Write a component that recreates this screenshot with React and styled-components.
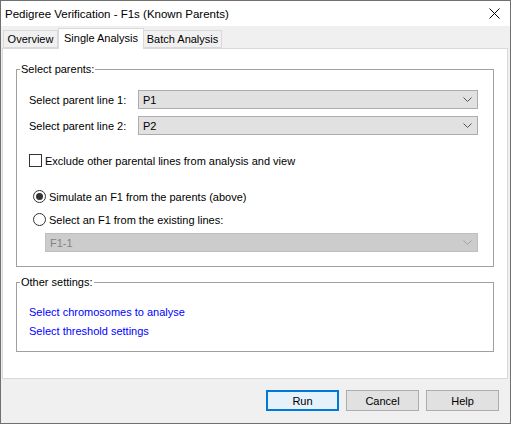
import React from 'react';
import styled, {createGlobalStyle} from 'styled-components';

const GlobalStyle = createGlobalStyle`
	html, body {
		margin: 0;
		padding: 0;
		background: #ffffff;
	}
	body {
		font-family: "Liberation Sans", Arial, sans-serif;
		font-size: 11px;
		color: #000000;
	}
`;

const Window = styled.div`
	width: 511px;
	height: 424px;
	box-sizing: border-box;
	border: 1px solid #707070;
	background: #f0f0f0;
	display: flex;
	flex-direction: column;
`;

const TitleBar = styled.div`
	height: 25px;
	flex: 0 0 auto;
	background: #ffffff;
	display: flex;
	align-items: center;
	justify-content: space-between;
	padding: 0 10px 0 4px;
	font-size: 11.5px;
`;

const CloseButton = styled.div`
	width: 12px;
	height: 12px;
	display: flex;
	align-items: center;
	justify-content: center;
`;

const Body = styled.div`
	flex: 1;
	display: flex;
	flex-direction: column;
	padding: 0 2px 0 1px;
`;

const TabRow = styled.div`
	display: flex;
	align-items: flex-end;
	height: 22px;
	padding-left: 1px;
`;

const Tab = styled.div`
	box-sizing: border-box;
	height: ${p => (p.$active ? '21px' : '18px')};
	width: ${p => p.$width}px;
	margin: ${p => (p.$active ? '0 0 -1px 0' : '0')};
	margin-left: ${p => (p.$active ? '0' : '-1px')};
	position: relative;
	z-index: ${p => (p.$active ? 1 : 0)};
	background: ${p => (p.$active ? '#ffffff' : '#f0f0f0')};
	border: 1px solid #d9d9d9;
	border-bottom: ${p => (p.$active ? 'none' : '1px solid #d9d9d9')};
	display: flex;
	align-items: center;
	justify-content: center;
	white-space: nowrap;
	padding-bottom: ${p => (p.$active ? '2px' : '0')};
	&:first-child {
		margin-left: 0;
	}
`;

const Panel = styled.div`
	box-sizing: border-box;
	height: 331px;
	flex: 0 0 auto;
	background: #ffffff;
	border: 1px solid #d9d9d9;
	padding: 13px 13px 0 13px;
	display: flex;
	flex-direction: column;
	gap: 8px;
`;

const GroupBox = styled.fieldset`
	margin: 0;
	border: 1px solid #a0a0a0;
	padding: 0 15px ${p => p.$bottom}px 3px;
	min-width: 0;
`;

const Legend = styled.legend`
	padding: 0 1px;
	line-height: 15px;
`;

const GroupContent = styled.div`
	display: flex;
	flex-direction: column;
	padding-left: 9px;
`;

const ComboRow = styled.div`
	display: grid;
	grid-template-columns: ${p => (p.$single ? '1fr' : '109px 1fr')};
	align-items: center;
	margin-top: ${p => p.$top}px;
`;

const Combo = styled.div`
	box-sizing: border-box;
	height: 19px;
	background: ${p => (p.$disabled ? '#cccccc' : '#e1e1e1')};
	border: 1px solid ${p => (p.$disabled ? '#bfbfbf' : '#adadad')};
	color: ${p => (p.$disabled ? '#838383' : '#000000')};
	display: flex;
	align-items: center;
	justify-content: space-between;
	padding: 0 5px 0 4px;
	margin-left: ${p => p.$indent || 0}px;
`;

const OptionRow = styled.label`
	display: flex;
	align-items: center;
	height: 15px;
	margin-top: ${p => p.$top}px;
	padding-left: ${p => p.$indent || 0}px;
`;

const CheckBox = styled.span`
	box-sizing: border-box;
	width: 13px;
	height: 13px;
	border: 1px solid #333333;
	background: #ffffff;
	margin-right: 3px;
`;

const Radio = styled.span`
	box-sizing: border-box;
	width: 13px;
	height: 13px;
	border-radius: 50%;
	border: 1px solid #333333;
	background: #ffffff;
	margin-right: 3px;
	display: flex;
	align-items: center;
	justify-content: center;
	&::after {
		content: '';
		width: 7px;
		height: 7px;
		border-radius: 50%;
		background: ${p => (p.$checked ? '#333333' : 'transparent')};
	}
`;

const LinkText = styled.a`
	color: #0000ff;
	text-decoration: none;
	line-height: 15px;
	margin-top: ${p => p.$top}px;
	cursor: pointer;
`;

const Footer = styled.div`
	flex: 1;
	display: flex;
	justify-content: flex-end;
	align-items: flex-start;
	gap: 7px;
	padding: 11px 9px 0 0;
`;

const Button = styled.button`
	box-sizing: border-box;
	width: 73px;
	height: 21px;
	margin: 0;
	font-family: inherit;
	font-size: 11px;
	color: #000000;
	background: ${p => (p.$default ? '#e5f1fb' : '#e1e1e1')};
	border: 1px solid ${p => (p.$default ? '#0078d7' : '#adadad')};
	box-shadow: ${p => (p.$default ? 'inset 0 0 0 1px #0078d7' : 'none')};
	padding: 0;
`;

const Chevron = ({color}) => (
	<svg width="9" height="5" viewBox="0 0 9 5">
		<polyline points="0.5,0.5 4.5,4.5 8.5,0.5" fill="none" stroke={color} strokeWidth="1"/>
	</svg>
);

const ParentsGroup = () => {
	return (
		<GroupBox $bottom={14}>
			<Legend>Select parents:</Legend>
			<GroupContent>
				<ComboRow $top={13}>
					<span>Select parent line 1:</span>
					<Combo>P1<Chevron color="#555555"/></Combo>
				</ComboRow>
				<ComboRow $top={7}>
					<span>Select parent line 2:</span>
					<Combo>P2<Chevron color="#555555"/></Combo>
				</ComboRow>
				<OptionRow $top={18}>
					<CheckBox/>
					Exclude other parental lines from analysis and view
				</OptionRow>
				<OptionRow $top={21} $indent={4}>
					<Radio $checked/>
					Simulate an F1 from the parents (above)
				</OptionRow>
				<OptionRow $top={8} $indent={4}>
					<Radio/>
					Select an F1 from the existing lines:
				</OptionRow>
				<ComboRow $top={6} $single>
					<Combo $disabled $indent={16}>F1-1<Chevron color="#a0a0a0"/></Combo>
				</ComboRow>
			</GroupContent>
		</GroupBox>
	)
}

const OtherGroup = () => {
	return (
		<GroupBox $bottom={12}>
			<Legend>Other settings:</Legend>
			<GroupContent>
				<LinkText $top={15}>Select chromosomes to analyse</LinkText>
				<LinkText $top={4}>Select threshold settings</LinkText>
			</GroupContent>
		</GroupBox>
	)
}

const App = () => {
	return (
		<>
			<GlobalStyle/>
			<Window>
				<TitleBar>
					<span>Pedigree Verification - F1s (Known Parents)</span>
					<CloseButton>
						<svg width="11" height="11" viewBox="0 0 11 11">
							<path d="M0.5 0.5 L10.5 10.5 M10.5 0.5 L0.5 10.5" stroke="#000" strokeWidth="1"/>
						</svg>
					</CloseButton>
				</TitleBar>
				<Body>
					<TabRow>
						<Tab $width={55}>Overview</Tab>
						<Tab $width={86} $active>Single Analysis</Tab>
						<Tab $width={79}>Batch Analysis</Tab>
					</TabRow>
					<Panel>
						<ParentsGroup/>
						<OtherGroup/>
					</Panel>
					<Footer>
						<Button $default>Run</Button>
						<Button>Cancel</Button>
						<Button>Help</Button>
					</Footer>
				</Body>
			</Window>
		</>
	)
}

export default App;
